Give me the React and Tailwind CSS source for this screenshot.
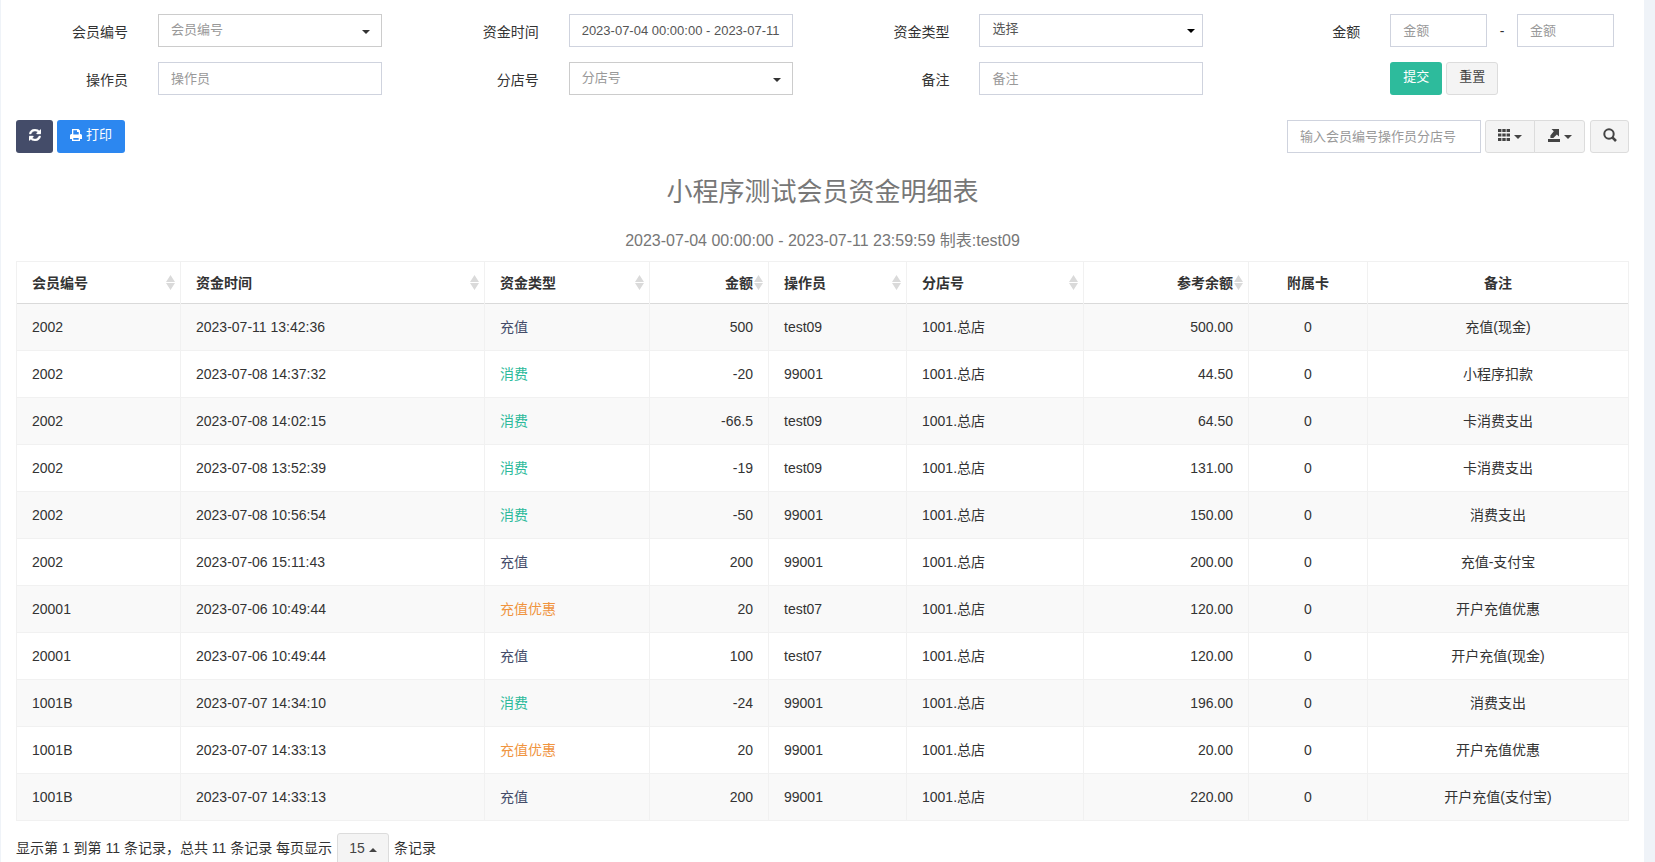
import React, { useState } from 'react'

const FIELD = 'block h-[33px] w-full min-w-0 rounded-none border border-[#cfd3de] bg-white px-3 pb-px text-[13px] text-[#555] placeholder:text-[#999] outline-none focus:border-[#66afe9]'
const GREY_BUTTON = 'flex h-[33px] items-center justify-center border border-[#dcdcdc] bg-[#f4f4f4] pb-[3px] text-[#444] hover:bg-[#e7e7e7]'

const COLUMNS = [
  { key: 'member', title: '会员编号', width: 'w-[164px]', align: 'text-left', sortable: true },
  { key: 'time', title: '资金时间', width: 'w-[304px]', align: 'text-left', sortable: true },
  { key: 'type', title: '资金类型', width: 'w-[165px]', align: 'text-left', sortable: true },
  { key: 'amount', title: '金额', width: 'w-[119px]', align: 'text-right', sortable: true },
  { key: 'operator', title: '操作员', width: 'w-[138px]', align: 'text-left', sortable: true },
  { key: 'branch', title: '分店号', width: 'w-[177px]', align: 'text-left', sortable: true },
  { key: 'balance', title: '参考余额', width: 'w-[165px]', align: 'text-right', sortable: true },
  { key: 'card', title: '附属卡', width: 'w-[119px]', align: 'text-center' },
  { key: 'remark', title: '备注', width: 'w-[261px]', align: 'text-center' },
]

const ROWS = [
  { member: '2002', time: '2023-07-11 13:42:36', type: '充值', amount: '500', operator: 'test09', balance: '500.00', remark: '充值(现金)' },
  { member: '2002', time: '2023-07-08 14:37:32', type: '消费', amount: '-20', operator: '99001', balance: '44.50', remark: '小程序扣款' },
  { member: '2002', time: '2023-07-08 14:02:15', type: '消费', amount: '-66.5', operator: 'test09', balance: '64.50', remark: '卡消费支出' },
  { member: '2002', time: '2023-07-08 13:52:39', type: '消费', amount: '-19', operator: 'test09', balance: '131.00', remark: '卡消费支出' },
  { member: '2002', time: '2023-07-08 10:56:54', type: '消费', amount: '-50', operator: '99001', balance: '150.00', remark: '消费支出' },
  { member: '2002', time: '2023-07-06 15:11:43', type: '充值', amount: '200', operator: '99001', balance: '200.00', remark: '充值-支付宝' },
  { member: '20001', time: '2023-07-06 10:49:44', type: '充值优惠', amount: '20', operator: 'test07', balance: '120.00', remark: '开户充值优惠' },
  { member: '20001', time: '2023-07-06 10:49:44', type: '充值', amount: '100', operator: 'test07', balance: '120.00', remark: '开户充值(现金)' },
  { member: '1001B', time: '2023-07-07 14:34:10', type: '消费', amount: '-24', operator: '99001', balance: '196.00', remark: '消费支出' },
  { member: '1001B', time: '2023-07-07 14:33:13', type: '充值优惠', amount: '20', operator: '99001', balance: '20.00', remark: '开户充值优惠' },
  { member: '1001B', time: '2023-07-07 14:33:13', type: '充值', amount: '200', operator: '99001', balance: '220.00', remark: '开户充值(支付宝)' },
].map((row) => ({ ...row, branch: '1001.总店', card: '0' }))

const TYPE_COLORS = {
  充值: 'text-[#444c69]',
  消费: 'text-[#2dba9b]',
  充值优惠: 'text-[#f0953f]',
}

function Caret({ up = false, className = '' }) {
  return (
    <svg width="8" height="4" viewBox="0 0 8 4" fill="currentColor" aria-hidden="true" className={className}>
      <path d={up ? 'M0 4 4 0l4 4z' : 'M0 0h8L4 4z'} />
    </svg>
  )
}

function RefreshIcon() {
  return (
    <svg width="12" height="12" viewBox="0 0 1536 1536" fill="currentColor" stroke="currentColor" strokeWidth="50" aria-hidden="true">
      <path d="M1511 928q0 5-1 7-64 268-268 434.500T764 1536q-146 0-282.500-55T238 1324l-129 129q-19 19-45 19t-45-19-19-45V960q0-26 19-45t45-19h448q26 0 45 19t19 45-19 45l-137 137q71 66 161 102t187 36q134 0 250-65t186-179q11-17 53-117 8-23 30-23h192q13 0 22.500 9.500t9.500 22.500zm25-800v448q0 26-19 45t-45 19h-448q-26 0-45-19t-19-45 19-45l138-138Q969 256 768 256q-134 0-250 65T332 500q-11 17-53 117-8 23-30 23H50q-13 0-22.500-9.500T18 608v-7q65-268 270-434.500T768 0q146 0 284 55.500T1297 212l130-129q19-19 45-19t45 19 19 45z" />
    </svg>
  )
}

function PrintIcon() {
  return (
    <svg width="12" height="12" viewBox="0 0 12 12" fill="currentColor" aria-hidden="true">
      <path fillRule="evenodd" d="M2 0h6.500L10 1.500V5h.5A1.500 1.500 0 0 1 12 6.500V10h-2v2H2v-2H0V6.500A1.500 1.500 0 0 1 1.500 5H2zM3.300 1.300V5.500h5.400V3H7V1.300zM3.300 9v1.700h5.400V9z" />
    </svg>
  )
}

function GridIcon() {
  return (
    <svg width="12" height="12" viewBox="0 0 12 12" fill="currentColor" aria-hidden="true">
      <path d="M0 0h3.400v3H0zM4.300 0h3.400v3H4.300zM8.600 0H12v3H8.600zM0 4.400h3.400v3.200H0zM4.300 4.400h3.400v3.200H4.300zM8.600 4.400H12v3.200H8.600zM0 9h3.400v3H0zM4.300 9h3.400v3H4.300zM8.600 9H12v3H8.600z" />
    </svg>
  )
}

function ExportIcon() {
  return (
    <svg width="12" height="13" viewBox="0 0 12 13" fill="currentColor" aria-hidden="true">
      <path d="M3.500 0H11v7.500L8.900 5.400 5.300 9H2.400V6.600L5.800 2.300z M0 10h12v3H0z" />
    </svg>
  )
}

function SearchIcon() {
  return (
    <svg width="14" height="14" viewBox="0 0 14 14" fill="none" stroke="currentColor" aria-hidden="true">
      <circle cx="6" cy="6" r="4.700" strokeWidth="2" />
      <path d="M9.300 9.300 13 13" strokeWidth="2.600" />
    </svg>
  )
}

function SortIcon() {
  return (
    <svg width="9" height="15" viewBox="0 0 9 15" fill="#dadada" aria-hidden="true" className="absolute right-[5px] top-[13px]">
      <path d="M4.500 0 9 7H0zM0 8h9l-4.500 7z" />
    </svg>
  )
}

function Field({ id, label, children }) {
  return (
    <div className="grid grid-cols-3 px-[15px]">
      <label htmlFor={id} className="pr-[15px] pt-2 text-right leading-5">{label}</label>
      <div className="col-span-2 px-[15px]">{children}</div>
    </div>
  )
}

function PickerSelect({ id, placeholder }) {
  return (
    <div className="relative text-[#333]">
      <select id={id} className={`${FIELD} appearance-none !border-[#ccc] !text-[#999]`}>
        <option>{placeholder}</option>
      </select>
      <Caret className="pointer-events-none absolute right-3 top-4" />
    </div>
  )
}

export default function App() {
  const [range, setRange] = useState('2023-07-04 00:00:00 - 2023-07-11 23:59:59')

  return (
    <div className="h-screen overflow-y-auto bg-[#eff3f8] pl-px pr-[11px] font-['Liberation_Sans','Noto_Sans_CJK_SC',sans-serif] text-[14px] leading-5 text-[#333] [scrollbar-width:none]">
      <main className="min-h-full bg-white pt-[14px]">
        {/* Filters */}
        <form className="grid grid-cols-4 gap-y-[15px]" onSubmit={(e) => e.preventDefault()}>
          <Field id="member" label="会员编号"><PickerSelect id="member" placeholder="会员编号" /></Field>
          <Field id="range" label="资金时间">
            <input id="range" type="text" value={range} onChange={(e) => setRange(e.target.value)} className={FIELD} />
          </Field>
          <Field id="type" label="资金类型">
            <div className="relative text-black">
              <select id="type" className={`${FIELD} appearance-none !pb-[3px]`}>
                <option>选择</option>
                <option>充值</option>
                <option>消费</option>
                <option>充值优惠</option>
              </select>
              <Caret className="pointer-events-none absolute right-2 top-[15px]" />
            </div>
          </Field>
          <Field id="min" label="金额">
            <div className="flex items-center">
              <input id="min" type="text" placeholder="金额" className={FIELD} />
              <span className="w-[30px] shrink-0 text-center">-</span>
              <input type="text" aria-label="金额上限" placeholder="金额" className={FIELD} />
            </div>
          </Field>
          <Field id="operator" label="操作员"><input id="operator" type="text" placeholder="操作员" className={FIELD} /></Field>
          <Field id="branch" label="分店号"><PickerSelect id="branch" placeholder="分店号" /></Field>
          <Field id="remark" label="备注"><input id="remark" type="text" placeholder="备注" className={FIELD} /></Field>
          <div className="grid grid-cols-3 px-[15px]">
            <div className="col-span-2 col-start-2 flex gap-1 px-[15px] text-[13px]">
              <button type="submit" className="h-[33px] w-[52px] rounded-[3px] bg-[#2dbb9c] pb-[3px] text-white hover:bg-[#26a388]">提交</button>
              <button type="reset" className={`${GREY_BUTTON} w-[52px] rounded-[3px]`}>重置</button>
            </div>
          </div>
        </form>

        {/* Toolbar */}
        <div className="mt-[25px] flex justify-between px-[15px] text-[13px]">
          <div className="flex gap-1">
            <button type="button" aria-label="刷新" className="flex h-[33px] w-[37px] items-center justify-center rounded-[3px] bg-[#444c69] pb-[3px] text-white">
              <RefreshIcon />
            </button>
            <button type="button" className="flex h-[33px] w-[68px] items-center justify-center gap-1 rounded-[3px] bg-[#2c87f0] pb-[3px] text-white">
              <PrintIcon />打印
            </button>
          </div>
          <div className="flex">
            <div className="w-[194px]">
              <input type="text" aria-label="搜索" placeholder="输入会员编号操作员分店号" className={FIELD} />
            </div>
            <button type="button" aria-label="列" className={`${GREY_BUTTON} ml-1 w-[50px] gap-1 rounded-l-[3px]`}>
              <GridIcon /><Caret className="mt-1" />
            </button>
            <button type="button" aria-label="导出数据" className={`${GREY_BUTTON} -ml-px w-[51px] gap-1 rounded-r-[3px]`}>
              <ExportIcon /><Caret className="mt-1" />
            </button>
            <button type="button" aria-label="搜索" className={`${GREY_BUTTON} ml-[5px] w-[39px] rounded-[3px]`}>
              <SearchIcon />
            </button>
          </div>
        </div>

        <div className="px-[15px]">
          <h1 className="mt-[25px] text-center text-[26px] leading-7 text-[#777]">小程序测试会员资金明细表</h1>
          <p className="mt-[25px] text-center text-[16px] leading-5 text-[#777]">2023-07-04 00:00:00 - 2023-07-11 23:59:59 制表:test09</p>

          {/* Records */}
          <table className="mt-[10px] w-full table-fixed border-collapse border border-[#f1f1f1]">
            <thead>
              <tr className="h-[42px] border-b border-[#dadada]">
                {COLUMNS.map((col) => (
                  <th key={col.key} scope="col" className={`relative border-x border-x-[#f1f1f1] px-[15px] font-bold ${col.width} ${col.align}`}>
                    {col.title}
                    {col.sortable && <SortIcon />}
                  </th>
                ))}
              </tr>
            </thead>
            <tbody>
              {ROWS.map((row, i) => (
                <tr key={i} className="h-[47px] odd:bg-[#f9f9f9]">
                  {COLUMNS.map((col) => (
                    <td key={col.key} className={`border-x border-b border-[#f1f1f1] px-[15px] ${col.align} ${col.key === 'type' ? TYPE_COLORS[row.type] : ''}`}>
                      {row[col.key]}
                    </td>
                  ))}
                </tr>
              ))}
            </tbody>
          </table>

          {/* Pagination */}
          <div className="mt-3 flex gap-[5px]">
            <span className="pt-[5px]">显示第 1 到第 11 条记录，总共 11 条记录 每页显示</span>
            <button type="button" aria-label="每页条数" className={`${GREY_BUTTON} w-[52px] gap-1 rounded-[3px]`}>
              15<Caret up className="mt-1" />
            </button>
            <span className="pt-[5px]">条记录</span>
          </div>
        </div>
      </main>
    </div>
  )
}
